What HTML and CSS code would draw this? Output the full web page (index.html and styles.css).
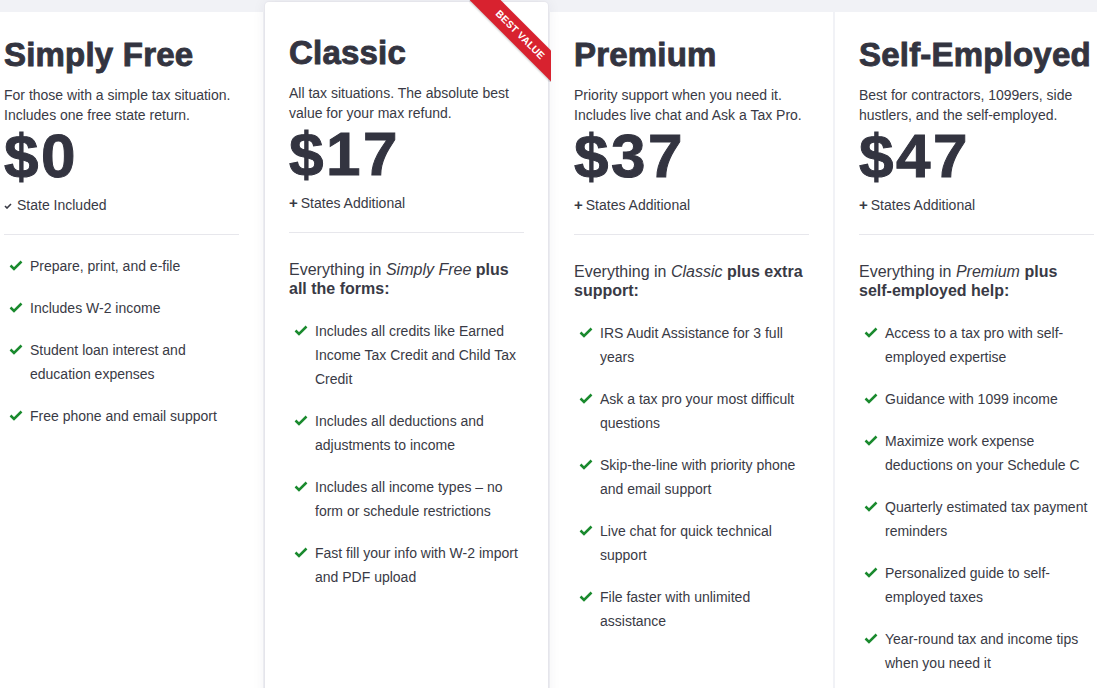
FILE: index.html
```html
<!DOCTYPE html>
<html lang="en">
<head>
<meta charset="utf-8">
<title>Pricing</title>
<link rel="stylesheet" href="styles.css">
</head>
<body>
<div class="plans">
  <section class="card">
    <h2 class="title">Simply Free</h2>
    <p class="desc">For those with a simple tax situation. Includes one free state return.</p>
    <div class="price">$0</div>
    <div class="state"><svg class="mini" viewBox="0 0 8 6" width="8" height="6"><polyline points="1,3 3,5 7,1" fill="none" stroke="#393a45" stroke-width="1.6"/></svg>State Included</div>
    <hr class="sep">
    <ul class="features first">
      <li><svg class="chk" viewBox="0 0 14 11" width="14" height="11"><polyline points="1.5,5.5 5,9 12.5,1.5" fill="none" stroke="#1a8a2e" stroke-width="2.5"/></svg><span>Prepare, print, and e-file</span></li>
      <li><svg class="chk" viewBox="0 0 14 11" width="14" height="11"><polyline points="1.5,5.5 5,9 12.5,1.5" fill="none" stroke="#1a8a2e" stroke-width="2.5"/></svg><span>Includes W-2 income</span></li>
      <li><svg class="chk" viewBox="0 0 14 11" width="14" height="11"><polyline points="1.5,5.5 5,9 12.5,1.5" fill="none" stroke="#1a8a2e" stroke-width="2.5"/></svg><span>Student loan interest and education expenses</span></li>
      <li><svg class="chk" viewBox="0 0 14 11" width="14" height="11"><polyline points="1.5,5.5 5,9 12.5,1.5" fill="none" stroke="#1a8a2e" stroke-width="2.5"/></svg><span>Free phone and email support</span></li>
    </ul>
  </section>

  <section class="card featured">
    <div class="ribbon-wrap"><div class="ribbon">BEST VALUE</div></div>
    <h2 class="title">Classic</h2>
    <p class="desc">All tax situations. The absolute best value for your max refund.</p>
    <div class="price">$17</div>
    <div class="state"><span class="plus">+</span>States Additional</div>
    <hr class="sep">
    <p class="lead">Everything in <em>Simply Free</em> <strong>plus all the forms:</strong></p>
    <ul class="features">
      <li><svg class="chk" viewBox="0 0 14 11" width="14" height="11"><polyline points="1.5,5.5 5,9 12.5,1.5" fill="none" stroke="#1a8a2e" stroke-width="2.5"/></svg><span>Includes all credits like Earned Income Tax Credit and Child Tax Credit</span></li>
      <li><svg class="chk" viewBox="0 0 14 11" width="14" height="11"><polyline points="1.5,5.5 5,9 12.5,1.5" fill="none" stroke="#1a8a2e" stroke-width="2.5"/></svg><span>Includes all deductions and adjustments to income</span></li>
      <li><svg class="chk" viewBox="0 0 14 11" width="14" height="11"><polyline points="1.5,5.5 5,9 12.5,1.5" fill="none" stroke="#1a8a2e" stroke-width="2.5"/></svg><span>Includes all income types – no form or schedule restrictions</span></li>
      <li><svg class="chk" viewBox="0 0 14 11" width="14" height="11"><polyline points="1.5,5.5 5,9 12.5,1.5" fill="none" stroke="#1a8a2e" stroke-width="2.5"/></svg><span>Fast fill your info with W-2 import and PDF upload</span></li>
    </ul>
  </section>

  <section class="card">
    <h2 class="title">Premium</h2>
    <p class="desc">Priority support when you need it. Includes live chat and Ask a Tax Pro.</p>
    <div class="price">$37</div>
    <div class="state"><span class="plus">+</span>States Additional</div>
    <hr class="sep">
    <p class="lead">Everything in <em>Classic</em> <strong>plus extra support:</strong></p>
    <ul class="features">
      <li><svg class="chk" viewBox="0 0 14 11" width="14" height="11"><polyline points="1.5,5.5 5,9 12.5,1.5" fill="none" stroke="#1a8a2e" stroke-width="2.5"/></svg><span>IRS Audit Assistance for 3 full years</span></li>
      <li><svg class="chk" viewBox="0 0 14 11" width="14" height="11"><polyline points="1.5,5.5 5,9 12.5,1.5" fill="none" stroke="#1a8a2e" stroke-width="2.5"/></svg><span>Ask a tax pro your most difficult questions</span></li>
      <li><svg class="chk" viewBox="0 0 14 11" width="14" height="11"><polyline points="1.5,5.5 5,9 12.5,1.5" fill="none" stroke="#1a8a2e" stroke-width="2.5"/></svg><span>Skip-the-line with priority phone and email support</span></li>
      <li><svg class="chk" viewBox="0 0 14 11" width="14" height="11"><polyline points="1.5,5.5 5,9 12.5,1.5" fill="none" stroke="#1a8a2e" stroke-width="2.5"/></svg><span>Live chat for quick technical support</span></li>
      <li><svg class="chk" viewBox="0 0 14 11" width="14" height="11"><polyline points="1.5,5.5 5,9 12.5,1.5" fill="none" stroke="#1a8a2e" stroke-width="2.5"/></svg><span>File faster with unlimited assistance</span></li>
    </ul>
  </section>

  <section class="card">
    <h2 class="title">Self-Employed</h2>
    <p class="desc">Best for contractors, 1099ers, side hustlers, and the self-employed.</p>
    <div class="price">$47</div>
    <div class="state"><span class="plus">+</span>States Additional</div>
    <hr class="sep">
    <p class="lead">Everything in <em>Premium</em> <strong>plus self-employed help:</strong></p>
    <ul class="features">
      <li><svg class="chk" viewBox="0 0 14 11" width="14" height="11"><polyline points="1.5,5.5 5,9 12.5,1.5" fill="none" stroke="#1a8a2e" stroke-width="2.5"/></svg><span>Access to a tax pro with self-employed expertise</span></li>
      <li><svg class="chk" viewBox="0 0 14 11" width="14" height="11"><polyline points="1.5,5.5 5,9 12.5,1.5" fill="none" stroke="#1a8a2e" stroke-width="2.5"/></svg><span>Guidance with 1099 income</span></li>
      <li><svg class="chk" viewBox="0 0 14 11" width="14" height="11"><polyline points="1.5,5.5 5,9 12.5,1.5" fill="none" stroke="#1a8a2e" stroke-width="2.5"/></svg><span>Maximize work expense deductions on your Schedule C</span></li>
      <li><svg class="chk" viewBox="0 0 14 11" width="14" height="11"><polyline points="1.5,5.5 5,9 12.5,1.5" fill="none" stroke="#1a8a2e" stroke-width="2.5"/></svg><span>Quarterly estimated tax payment reminders</span></li>
      <li><svg class="chk" viewBox="0 0 14 11" width="14" height="11"><polyline points="1.5,5.5 5,9 12.5,1.5" fill="none" stroke="#1a8a2e" stroke-width="2.5"/></svg><span>Personalized guide to self-employed taxes</span></li>
      <li><svg class="chk" viewBox="0 0 14 11" width="14" height="11"><polyline points="1.5,5.5 5,9 12.5,1.5" fill="none" stroke="#1a8a2e" stroke-width="2.5"/></svg><span>Year-round tax and income tips when you need it</span></li>
    </ul>
  </section>
</div>
</body>
</html>
```

FILE: styles.css
```css
html, body {
  margin: 0;
  padding: 0;
  background: #f1f2f6;
  overflow: hidden;
  height: 688px;
}
body {
  font-family: "Liberation Sans", Arial, sans-serif;
  color: #393a45;
}
.plans {
  display: flex;
  align-items: flex-start;
  gap: 2px;
  margin-left: -20px;
  padding-top: 2px;
  width: 1140px;
}
.card {
  flex: 0 0 283px;
  box-sizing: border-box;
  width: 283px;
  height: 760px;
  margin-top: 10px;
  padding: 23px 24px 0 24px;
  background: #ffffff;
  position: relative;
}
.card.featured {
  margin-top: 0;
  padding-top: 31px;
  border-radius: 4px 4px 0 0;
  box-shadow: 0 0 14px rgba(40, 40, 70, 0.07), 0 0 0 1px #ececf1;
  z-index: 1;
}
.title {
  margin: 0 0 10px 0;
  font-size: 33px;
  line-height: 40px;
  font-weight: 700;
  letter-spacing: 0.2px;
  color: #333440;
  -webkit-text-stroke: 0.9px #333440;
}
.desc {
  margin: 0;
  font-size: 14px;
  line-height: 20px;
}
.price {
  margin-top: 1px;
  font-size: 62px;
  line-height: 60px;
  font-weight: 700;
  letter-spacing: 2.5px;
  color: #333440;
  -webkit-text-stroke: 1px #333440;
}
.state {
  margin-top: 9px;
  font-size: 14px;
  line-height: 20px;
  display: flex;
  align-items: center;
}
.mini {
  margin-right: 5px;
  margin-top: 1px;
}
.plus {
  font-weight: 700;
  font-size: 15px;
  margin-right: 3px;
}
.sep {
  margin: 19px 0 0 0;
  border: 0;
  height: 1px;
  background: #e7e7ec;
}
.lead {
  margin: 28px 0 0 0;
  font-size: 16px;
  line-height: 18.5px;
}
.lead em {
  font-style: italic;
}
.lead strong {
  font-weight: 700;
}
.features {
  list-style: none;
  margin: 21px 0 0 0;
  padding: 0;
}
.features.first {
  margin-top: 19px;
}
.features li {
  display: flex;
  align-items: flex-start;
  font-size: 14px;
  line-height: 24px;
  margin-bottom: 18px;
}
.chk {
  flex: 0 0 14px;
  margin: 6px 7px 0 5px;
}
.ribbon-wrap {
  position: absolute;
  top: -2px;
  right: -3px;
  width: 82px;
  height: 82px;
  overflow: hidden;
}
.ribbon {
  position: absolute;
  top: 24px;
  left: -9px;
  width: 120px;
  height: 22px;
  line-height: 22px;
  background: #d8222f;
  color: #ffffff;
  font-size: 10px;
  font-weight: 700;
  text-align: center;
  letter-spacing: 0.2px;
  transform: rotate(45deg);
  box-shadow: 0 1px 2px rgba(0, 0, 0, 0.2);
}
```
